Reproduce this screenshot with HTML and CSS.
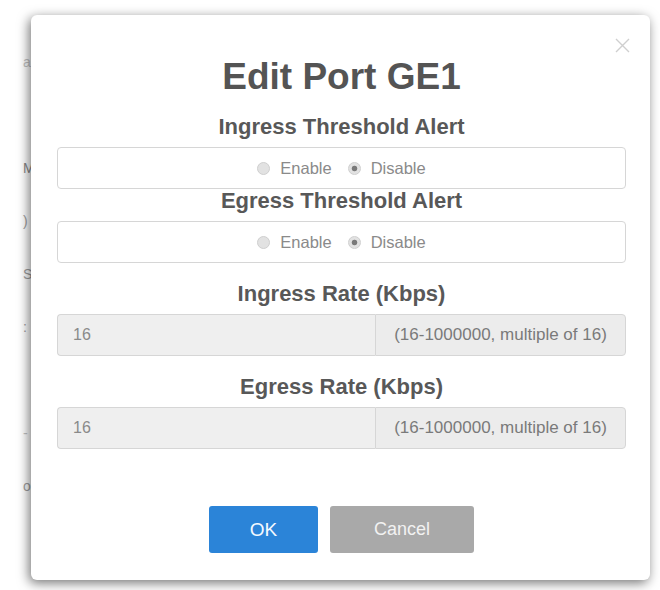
FILE: index.html
```html
<!DOCTYPE html>
<html lang="en">
<head>
<meta charset="utf-8">
<title>Edit Port GE1</title>
<link rel="stylesheet" href="styles.css">
</head>
<body>
<div class="page">
  <div class="bg-form">
    <div class="bg-row light">area</div>
    <div class="bg-row"></div>
    <div class="bg-row dark">MTU</div>
    <div class="bg-row">)</div>
    <div class="bg-row">Speed</div>
    <div class="bg-row">:</div>
    <div class="bg-row"></div>
    <div class="bg-row light">-</div>
    <div class="bg-row tall">os</div>
  </div>

  <div class="modal">
    <button class="close" aria-label="Close">
      <svg width="15" height="15" viewBox="0 0 15 15"><path d="M1 1 L14 14 M14 1 L1 14" stroke="#cfcfcf" stroke-width="1.4" fill="none"/></svg>
    </button>
    <h2 class="title">Edit Port GE1</h2>

    <section class="group first">
      <h4 class="label">Ingress Threshold Alert</h4>
      <div class="radio-box">
        <label class="radio"><span class="dot"></span>Enable</label>
        <label class="radio"><span class="dot checked"></span>Disable</label>
      </div>
    </section>

    <section class="group">
      <h4 class="label">Egress Threshold Alert</h4>
      <div class="radio-box">
        <label class="radio"><span class="dot"></span>Enable</label>
        <label class="radio"><span class="dot checked"></span>Disable</label>
      </div>
    </section>

    <section class="group rate">
      <h4 class="label">Ingress Rate (Kbps)</h4>
      <div class="input-group">
        <div class="input">16</div>
        <div class="addon">(16-1000000, multiple of 16)</div>
      </div>
    </section>

    <section class="group rate">
      <h4 class="label">Egress Rate (Kbps)</h4>
      <div class="input-group">
        <div class="input">16</div>
        <div class="addon">(16-1000000, multiple of 16)</div>
      </div>
    </section>

    <div class="actions">
      <button class="btn ok">OK</button>
      <button class="btn cancel">Cancel</button>
    </div>
  </div>
</div>
</body>
</html>
```
FILE: styles.css
```css
html, body {
  margin: 0;
  padding: 0;
  background: #ffffff;
  font-family: "Liberation Sans", Arial, sans-serif;
}

.page {
  position: relative;
  width: 660px;
  height: 590px;
  overflow: hidden;
}

.bg-form {
  display: flex;
  flex-direction: column;
  padding: 52px 0 0 23px;
}

.bg-row {
  height: 53px;
  font-size: 14px;
  line-height: 20px;
  color: #a0a0a0;
}

.bg-row.dark { color: #888; }
.bg-row.light { color: #c4c4c4; }

.modal {
  position: absolute;
  left: 31px;
  top: 15px;
  width: 619px;
  height: 565px;
  box-sizing: border-box;
  padding: 41px 24px 27px 26px;
  background: #ffffff;
  border-radius: 6px;
  box-shadow: -2px 3px 12px rgba(0, 0, 0, 0.55);
  display: flex;
  flex-direction: column;
}

.close {
  position: absolute;
  right: 20px;
  top: 23px;
  width: 15px;
  height: 15px;
  padding: 0;
  border: 0;
  background: transparent;
  display: flex;
}

.title {
  margin: 0;
  font-size: 37px;
  line-height: 42px;
  font-weight: bold;
  color: #545454;
  text-align: center;
}

.group.first { margin-top: 17px; }
.group.rate { margin-top: 19px; }

.label {
  margin: 0 0 8px;
  font-size: 22px;
  line-height: 24px;
  font-weight: bold;
  color: #585858;
  text-align: center;
}

.radio-box {
  height: 42px;
  box-sizing: border-box;
  border: 1px solid #d6d6d6;
  border-radius: 4px;
  display: flex;
  align-items: center;
  justify-content: center;
  gap: 16px;
}

.radio {
  display: flex;
  align-items: center;
  gap: 10px;
  font-size: 16.5px;
  color: #8a8a8a;
}

.dot {
  width: 13px;
  height: 13px;
  box-sizing: border-box;
  border-radius: 50%;
  background: #e2e2e2;
  border: 1px solid #cfcfcf;
}

.dot.checked {
  background: radial-gradient(circle, #7a7a7a 0 2.4px, #e2e2e2 3.2px);
}

.input-group {
  display: flex;
  height: 42px;
}

.input {
  flex: 1;
  box-sizing: border-box;
  background: #efefef;
  border: 1px solid #d6d6d6;
  border-right: 0;
  border-radius: 4px 0 0 4px;
  padding-left: 15px;
  display: flex;
  align-items: center;
  font-size: 16px;
  color: #8a8a8a;
}

.addon {
  width: 251px;
  box-sizing: border-box;
  background: #ececec;
  border: 1px solid #d6d6d6;
  border-radius: 0 4px 4px 0;
  display: flex;
  align-items: center;
  justify-content: center;
  font-size: 17px;
  color: #7a7a7a;
}

.actions {
  margin-top: 57px;
  display: flex;
  justify-content: center;
  gap: 12px;
}

.btn {
  height: 47px;
  border: 0;
  border-radius: 3px;
  font-family: "Liberation Sans", Arial, sans-serif;
  font-size: 19px;
  padding: 0;
}

.btn.ok {
  width: 109px;
  background: #2b84d8;
  color: #f4f9ff;
}

.btn.cancel {
  width: 144px;
  background: #a9a9a9;
  color: #f2f2f2;
  font-size: 18px;
}
```
